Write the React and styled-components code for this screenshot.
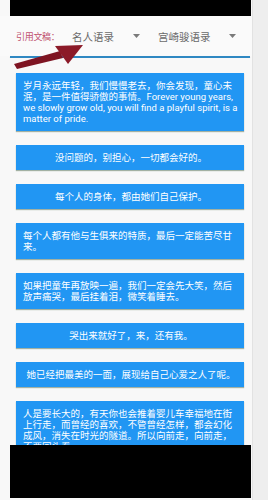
import React from "react";
import styled, { createGlobalStyle } from "styled-components";

const GlobalStyle = createGlobalStyle`
  html, body {
    margin: 0;
    padding: 0;
    background: #f6f6f6;
  }
  body {
    font-family: "Roboto", "Noto Sans CJK SC", sans-serif;
  }
`;

const quotes = [
  {
    id: 1,
    text: "岁月永远年轻，我们慢慢老去，你会发现，童心未泯，是一件值得骄傲的事情。Forever young years, we slowly grow old, you will find a playful spirit, is a matter of pride.",
  },
  { id: 2, text: "没问题的，别担心，一切都会好的。", center: true },
  { id: 3, text: "每个人的身体，都由她们自己保护。", center: true },
  { id: 4, text: "每个人都有他与生俱来的特质，最后一定能苦尽甘来。" },
  { id: 5, text: "如果把童年再放映一遍，我们一定会先大笑，然后放声痛哭，最后挂着泪，微笑着睡去。" },
  { id: 6, text: "哭出来就好了，来，还有我。", center: true },
  { id: 7, text: "她已经把最美的一面，展现给自己心爱之人了呢。", center: true },
  {
    id: 8,
    text: "人是要长大的，有天你也会推着婴儿车幸福地在街上行走，而曾经的喜欢，不管曾经怎样，都会幻化成风，消失在时光的隧道。所以向前走，向前走，不要回头看。",
  },
];

const Arrow = () => (
  <ArrowSvg width="90" height="76" viewBox="0 0 90 76">
    <polygon points="14,64 17,69 63,58 60,51" fill="#7e1422" />
    <polygon points="55,46 83,45 68,64" fill="#8c1a28" />
  </ArrowSvg>
);

const Caret = () => (
  <svg width="7" height="4" viewBox="0 0 7 4">
    <polygon points="0,0 7,0 3.5,4" fill="#7a7a7a" />
  </svg>
);

export default function App() {
  return (
    <>
      <GlobalStyle />
      <Frame>
        <Main>
          <TopBar />
          <Header>
            <Label>引用文稿：</Label>
            <Spinner $width={78}>
              名人语录
              <Caret />
            </Spinner>
            <Spinner $width={88} $offset={8}>
              宫崎骏语录
              <Caret />
            </Spinner>
          </Header>
          <Rule />
          <List>
            {quotes.map((q) => (
              <Card key={q.id} $center={q.center}>
                {q.text}
              </Card>
            ))}
          </List>
        </Main>
        <Side />
        <Arrow />
        <BottomBar />
      </Frame>
    </>
  );
}

const Frame = styled.div`
  position: relative;
  width: 268px;
  height: 500px;
  overflow: hidden;
  display: flex;
`;

const Main = styled.div`
  width: 252px;
  flex-shrink: 0;
  background: #f8f8f8;
  display: flex;
  flex-direction: column;
`;

const Side = styled.div`
  flex: 1;
  background: #eeeeee;
  border-left: 1px solid #e2e2e2;
`;

const TopBar = styled.div`
  margin-left: 10px;
  width: 241px;
  height: 16px;
  background: #000;
`;

const Header = styled.div`
  height: 40px;
  display: flex;
  align-items: center;
  padding-left: 16px;
  background: #fafafa;
`;

const Label = styled.span`
  width: 56px;
  font-size: 9px;
  color: #c0506e;
  letter-spacing: -0.3px;
`;

const Spinner = styled.div`
  width: ${(p) => p.$width}px;
  margin-left: ${(p) => p.$offset || 0}px;
  box-sizing: border-box;
  padding-right: 10px;
  display: flex;
  align-items: center;
  justify-content: space-between;
  font-size: 10.5px;
  color: #6a6a6a;
`;

const Rule = styled.div`
  margin-left: 10px;
  width: 240px;
  height: 2px;
  background: #2f88c2;
  box-shadow: 0 1px 1px rgba(0, 0, 0, 0.25);
`;

const List = styled.div`
  display: flex;
  flex-direction: column;
  gap: 14px;
  padding: 15px 0 0 16px;
  background: #f8f8f8;
`;

const Card = styled.div`
  width: 228px;
  box-sizing: border-box;
  padding: 7px 5px 7px 7px;
  background: #2196f3;
  color: #fff;
  font-size: 9.5px;
  line-height: 11px;
  text-align: ${(p) => (p.$center ? "center" : "left")};
  box-shadow: 0 1px 1px rgba(60, 90, 60, 0.45);
`;

const ArrowSvg = styled.svg`
  position: absolute;
  left: 0;
  top: 0;
`;

const BottomBar = styled.div`
  position: absolute;
  left: 10px;
  top: 445px;
  width: 241px;
  height: 53px;
  background: #000;
`;
